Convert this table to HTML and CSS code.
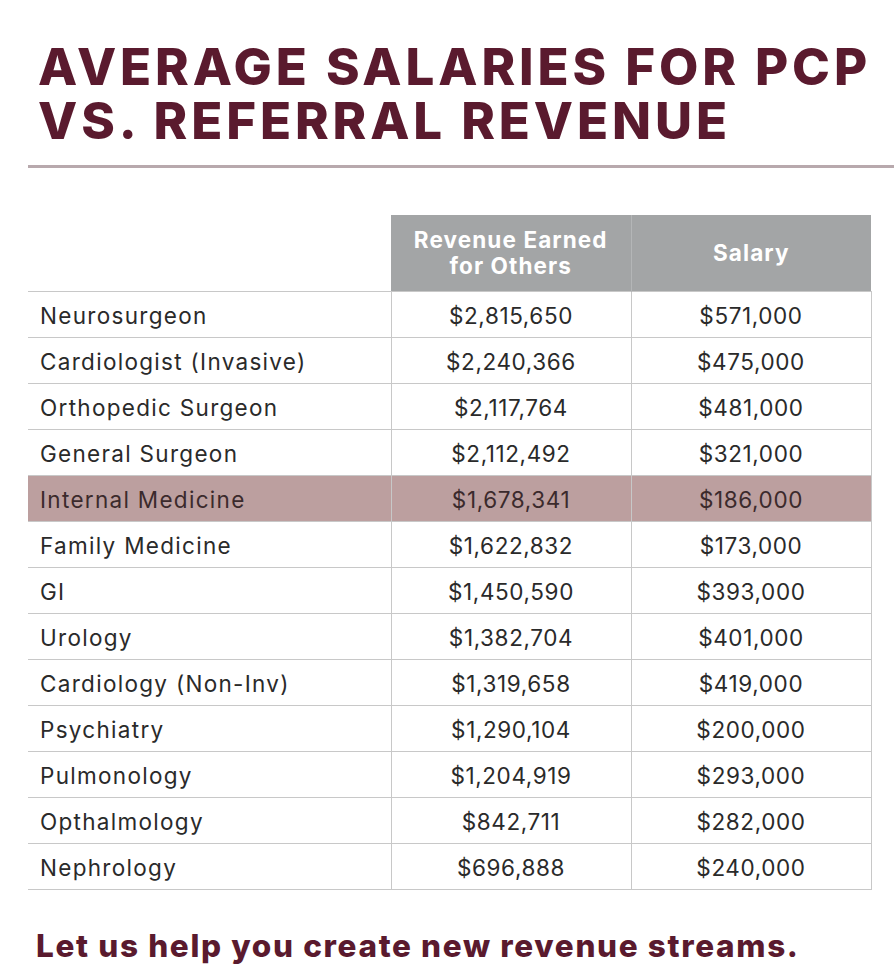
FILE: index.html
```html
<!DOCTYPE html>
<html>
<head>
<meta charset="utf-8">
<link rel="stylesheet" href="styles.css">
</head>
<body>
<div class="page">
  <h1 class="title">AVERAGE SALARIES FOR PCP<br>VS. REFERRAL REVENUE</h1>
  <div class="rule"></div>
  <table class="salaries">
    <colgroup>
      <col class="c-name">
      <col class="c-val">
      <col class="c-val">
    </colgroup>
    <thead>
      <tr>
        <th class="blank"></th>
        <th class="head">Revenue Earned<br>for Others</th>
        <th class="head">Salary</th>
      </tr>
    </thead>
    <tbody>
      <tr><td class="name">Neurosurgeon</td><td>$2,815,650</td><td>$571,000</td></tr>
      <tr><td class="name">Cardiologist (Invasive)</td><td>$2,240,366</td><td>$475,000</td></tr>
      <tr><td class="name">Orthopedic Surgeon</td><td>$2,117,764</td><td>$481,000</td></tr>
      <tr><td class="name">General Surgeon</td><td>$2,112,492</td><td>$321,000</td></tr>
      <tr class="hl"><td class="name">Internal Medicine</td><td>$1,678,341</td><td>$186,000</td></tr>
      <tr><td class="name">Family Medicine</td><td>$1,622,832</td><td>$173,000</td></tr>
      <tr><td class="name">GI</td><td>$1,450,590</td><td>$393,000</td></tr>
      <tr><td class="name">Urology</td><td>$1,382,704</td><td>$401,000</td></tr>
      <tr><td class="name">Cardiology (Non-Inv)</td><td>$1,319,658</td><td>$419,000</td></tr>
      <tr><td class="name">Psychiatry</td><td>$1,290,104</td><td>$200,000</td></tr>
      <tr><td class="name">Pulmonology</td><td>$1,204,919</td><td>$293,000</td></tr>
      <tr><td class="name">Opthalmology</td><td>$842,711</td><td>$282,000</td></tr>
      <tr><td class="name">Nephrology</td><td>$696,888</td><td>$240,000</td></tr>
    </tbody>
  </table>
  <p class="cta">Let us help you create new revenue streams.</p>
</div>
</body>
</html>
```

FILE: styles.css
```css
html, body {
  margin: 0;
  padding: 0;
  background: #ffffff;
}
.page {
  width: 894px;
  height: 968px;
  overflow: hidden;
  font-family: "Inter", "Liberation Sans", sans-serif;
}
.title {
  margin: 0;
  padding: 40px 0 0 38px;
  font-size: 51px;
  line-height: 54px;
  font-weight: 800;
  letter-spacing: 3.9px;
  color: #5a1a2e;
  white-space: nowrap;
}
.rule {
  margin: 17px 0 0 28px;
  height: 3px;
  background: #b8a9ad;
}
.salaries {
  margin: 47px 0 0 28px;
  width: 843px;
  border-collapse: collapse;
  table-layout: fixed;
}
.c-name {
  width: 363px;
}
.c-val {
  width: 240px;
}
.salaries th.blank {
  background: transparent;
  padding: 0;
}
.salaries th.head {
  height: 76px;
  padding: 0;
  background: #a3a5a6;
  color: #ffffff;
  font-weight: 700;
  font-size: 22.5px;
  line-height: 26px;
  letter-spacing: 1.1px;
  text-align: center;
}
.salaries th.head + th.head {
  border-left: 1px solid #b4b6b7;
}
.salaries td {
  height: 46px;
  padding: 2px 0 0;
  box-sizing: border-box;
  border: 1px solid #c8c8c8;
  text-align: center;
  font-size: 22.5px;
  color: #2a2a2a;
  letter-spacing: 0.6px;
}
.salaries td.name {
  text-align: left;
  padding-left: 12px;
  border-left: none;
  letter-spacing: 1.3px;
}
.salaries tr.hl td {
  background: #bc9f9f;
  color: #3b2a2c;
}
.cta {
  margin: 40px 0 0 36px;
  font-size: 31.5px;
  line-height: 32px;
  font-weight: 800;
  color: #5a1a2e;
  letter-spacing: 1.65px;
  white-space: nowrap;
}
```
